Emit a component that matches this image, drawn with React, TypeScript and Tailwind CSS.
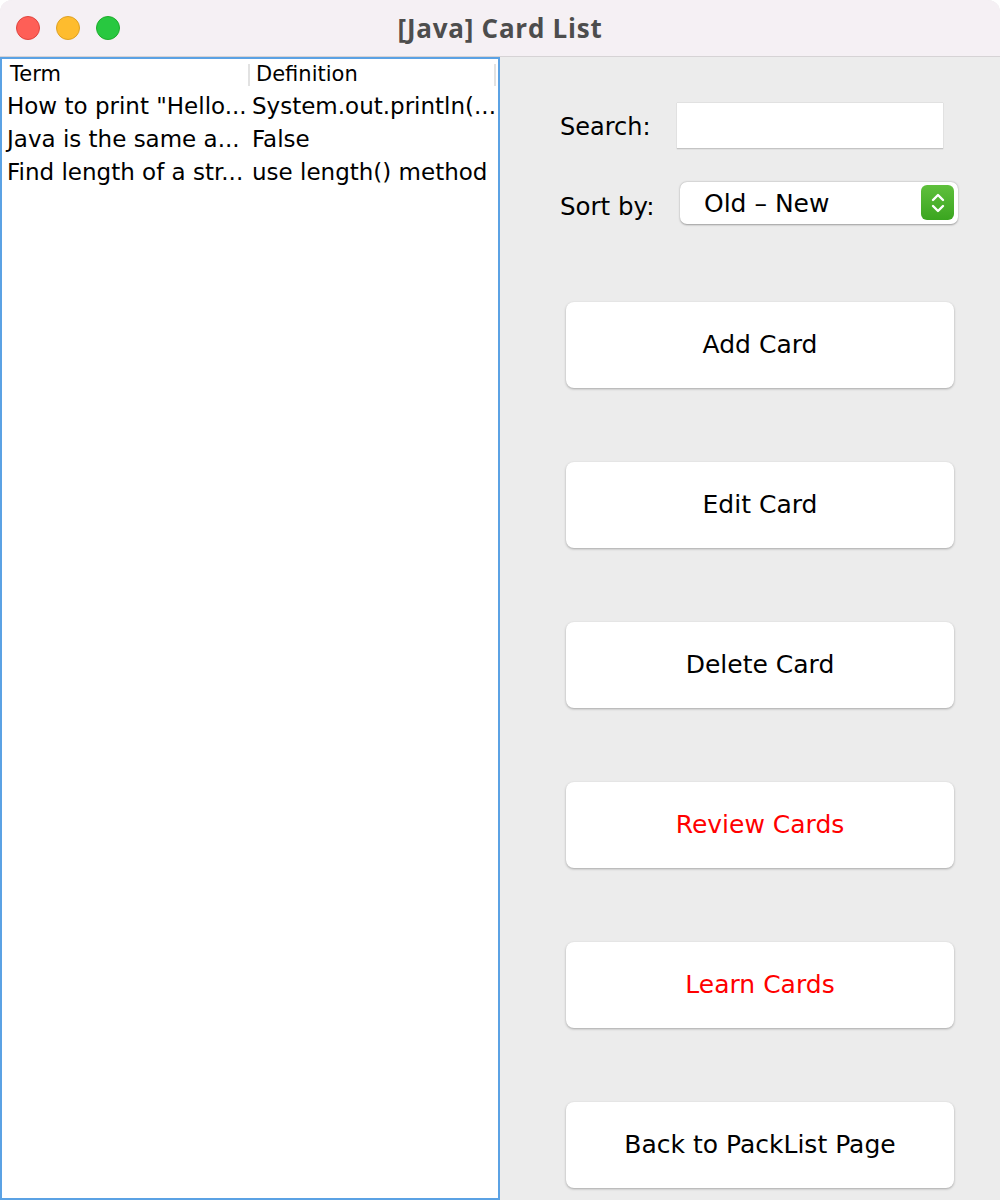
const rows = [
  { term: 'How to print "Hello...', def: "System.out.println(..." },
  { term: "Java is the same a...", def: "False" },
  { term: "Find length of a str...", def: "use length() method" },
];

const buttons = [
  { label: "Add Card", red: false },
  { label: "Edit Card", red: false },
  { label: "Delete Card", red: false },
  { label: "Review Cards", red: true },
  { label: "Learn Cards", red: true },
  { label: "Back to PackList Page", red: false },
];

export default function App() {
  return (
    <div className="w-[1000px] h-[1200px] flex flex-col overflow-hidden rounded-t-[12px] bg-[#ececec] [font-family:DejaVu_Sans,sans-serif]">
      {/* title bar */}
      <div className="relative h-[57px] shrink-0 flex items-center justify-center bg-[#f5f0f4] border-b border-[#d6d3d5]">
        <div className="absolute left-[16px] top-[16px] flex gap-[16px]">
          <span className="w-[24px] h-[24px] rounded-full bg-[#fe5f57] border border-[#e0443e]" />
          <span className="w-[24px] h-[24px] rounded-full bg-[#febc2e] border border-[#dea123]" />
          <span className="w-[24px] h-[24px] rounded-full bg-[#28c840] border border-[#1dad2b]" />
        </div>
        <span className="text-[26px] font-bold text-[#4d4d4d] [font-family:Open_Sans,sans-serif] tracking-[0.75px]">
          [Java] Card List
        </span>
      </div>

      <div className="flex flex-1">
        {/* table */}
        <div className="w-[500px] border-2 border-[#5ba2e4] bg-white">
          <div className="flex h-[31px] items-center text-[21px] text-black">
            <div className="w-[246px] pl-[8px]">Term</div>
            <div className="w-[2px] h-[22px] bg-[#e2e2e2]" />
            <div className="flex-1 pl-[6px]">Definition</div>
            <div className="w-[2px] h-[22px] bg-[#e2e2e2] mr-[2px]" />
          </div>
          {rows.map((r) => (
            <div key={r.term} className="flex h-[33px] items-center text-[23px] text-black whitespace-nowrap">
              <div className="w-[248px] pl-[5px] overflow-hidden">{r.term}</div>
              <div className="flex-1 pl-[2px] overflow-hidden">{r.def}</div>
            </div>
          ))}
        </div>

        {/* controls */}
        <div className="flex-1 flex flex-col pt-[46px] text-black">
          <div className="flex items-center h-[46px] pl-[60px]">
            <span className="text-[24px] w-[117px] pt-[2px]">Search:</span>
            <div className="w-[266px] h-[46px] bg-white border-b border-[#c4c4c4] shadow-[0_0_1px_rgba(0,0,0,0.25)]" />
          </div>
          <div className="flex items-center h-[42px] pl-[60px] mt-[33px]">
            <span className="text-[24.5px] w-[120px] pt-[8px]">Sort by:</span>
            <div className="relative w-[278px] h-[42px] bg-white rounded-[7px] shadow-[0_0.5px_2px_rgba(0,0,0,0.35)] flex items-center pl-[24px]">
              <span className="text-[25px] pt-[2px]">Old – New</span>
              <div className="absolute right-[4px] top-[3px] w-[33px] h-[35px] rounded-[6px] bg-gradient-to-b from-[#5fc03c] to-[#3aa51f] flex items-center justify-center">
                <svg width="14" height="24" viewBox="0 0 14 24" fill="none" stroke="white" strokeWidth="2.4" strokeLinecap="round" strokeLinejoin="round">
                  <path d="M2 9 L7 4 L12 9" />
                  <path d="M2 15 L7 20 L12 15" />
                </svg>
              </div>
            </div>
          </div>

          <div className="flex flex-col gap-[74px] pl-[66px] mt-[78px]">
            {buttons.map((b) => (
              <div
                key={b.label}
                className={`w-[388px] h-[86px] bg-white rounded-[8px] shadow-[0_1px_2.5px_rgba(0,0,0,0.3)] flex items-center justify-center text-[25px] ${b.red ? "text-[#ff0000]" : "text-black"}`}
              >
                {b.label}
              </div>
            ))}
          </div>
        </div>
      </div>
    </div>
  );
}
